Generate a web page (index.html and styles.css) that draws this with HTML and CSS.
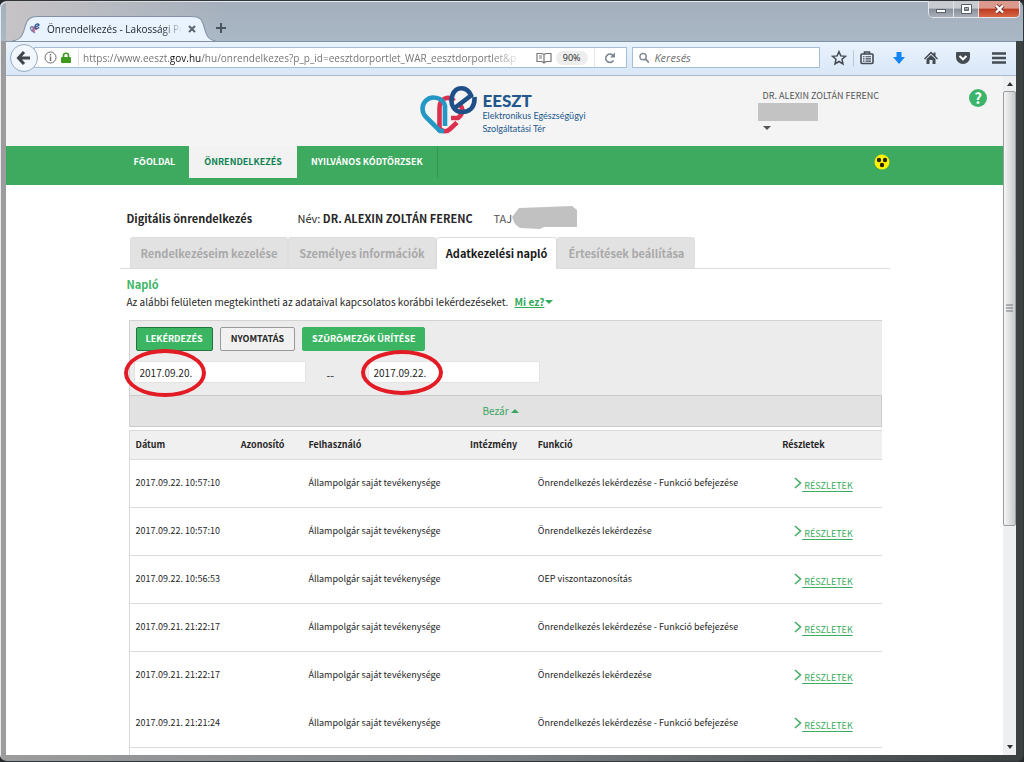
FILE: index.html
```html
<!DOCTYPE html>
<html lang="hu">
<head>
<meta charset="utf-8">
<meta name="viewport" content="width=device-width, initial-scale=1">
<title>Önrendelkezés - Lakossági Portál</title>
<link rel="stylesheet" href="styles.css">
</head>
<body>
<div class="window">
  <div class="titlebar">
    <div class="tab">
      <svg class="tab-shape" viewBox="0 0 200 25" preserveAspectRatio="none" aria-hidden="true"><path d="M0 25C10 24 11 17 13 10C15 3 18 .5 25 .5H176C184 .5 186 3 188 10C190 17 191 24 200 25" fill="#e9f3fd" stroke="#8292a4"/></svg>
      <svg class="favicon" viewBox="0 0 12 12" aria-hidden="true"><path d="M6 10L3 8C0 5 2 3 4 4V9" fill="none" stroke="#7685b4" stroke-width="1.5"/><path d="M5 9V5C5 3 8 4 7 7" fill="none" stroke="#d84a68" stroke-width="1.4"/><path d="M7 4L10 2C9 0 6 1 6 4S9 6 10 4" fill="none" stroke="#335b98" stroke-width="1.4"/></svg>
      <span class="tab-title">Önrendelkezés - Lakossági Po</span>
      <button class="plain" type="button" aria-label="Lap bezárása"><svg width="8" height="8" viewBox="0 0 8 8"><path d="M1 1L7 7M7 1L1 7" stroke="#5d6670" stroke-width="2"/></svg></button>
    </div>
    <button class="plain new-tab" type="button" aria-label="Új lap"><svg width="10" height="10" viewBox="0 0 10 10"><path d="M5 0V10M0 5H10" stroke="#4b555f" stroke-width="2"/></svg></button>
    <div class="controls">
      <button type="button" aria-label="Kis méret"><svg width="24" height="16" viewBox="0 0 24 16"><rect x="7.500" y="8.500" width="9" height="3" fill="#fff" stroke="#58606b"/></svg></button>
      <button type="button" aria-label="Teljes méret"><svg width="24" height="16" viewBox="0 0 24 16"><path d="M7.500 3.500H17.500V12.500H7.500ZM10.500 6.500V9.500H14.500V6.500Z" fill="#fff" fill-rule="evenodd" stroke="#58606b"/></svg></button>
      <button class="close" type="button" aria-label="Bezárás"><svg width="40" height="16" viewBox="0 0 40 16"><path d="M17 4.500L24 11.500M24 4.500L17 11.500" stroke="#6e3434" stroke-width="4"/><path d="M17 4.500L24 11.500M24 4.500L17 11.500" stroke="#fff" stroke-width="2.400"/></svg></button>
    </div>
  </div>

  <div class="toolbar">
    <button class="back" type="button" aria-label="Vissza"><svg width="16" height="14" viewBox="0 0 16 14"><path d="M8 1L2.500 7L8 13M3 7H14" fill="none" stroke="#40454b" stroke-width="3"/></svg></button>
    <div class="urlbox">
      <svg width="13" height="13" viewBox="0 0 13 13" aria-hidden="true"><circle cx="6.500" cy="6.500" r="5.500" fill="none" stroke="#6d6d6d"/><path d="M6.500 5.500V10M6.500 3V4.500" stroke="#6d6d6d" stroke-width="1.400"/></svg>
      <svg width="10" height="12" viewBox="0 0 10 12" aria-hidden="true"><path d="M2.500 6V3.500C2.500 .5 7.500 .5 7.500 3.500V6" fill="none" stroke="#3f9b1f" stroke-width="1.700"/><rect y="5" width="10" height="6" rx="1" fill="#3f9b1f"/></svg>
      <span class="url">https://www.eeszt.<b>gov.hu</b>/hu/onrendelkezes?p_p_id=eesztdorportlet_WAR_eesztdorportlet&amp;p</span>
      <svg width="16" height="12" viewBox="0 0 16 12" aria-hidden="true"><path d="M8 2.500L6 1.500H1V9.500H6L8 11L10 9.500H15V1.500H10ZM8 2.500V11" fill="#fff" stroke="#777" stroke-width="1.200"/><path d="M3 4H6M3 6H6" stroke="#777"/></svg>
      <span class="zoom">90%</span>
      <button class="plain reload" type="button" aria-label="Újratöltés"><svg width="12" height="12" viewBox="0 0 12 12"><path d="M9.500 4A4.200 4.200 0 1 0 9.500 8.500" fill="none" stroke="#7b8792" stroke-width="1.600"/><path d="M11 .5V5.500H6Z" fill="#7b8792"/></svg></button>
    </div>
    <label class="searchbox">
      <svg width="12" height="12" viewBox="0 0 12 12" aria-hidden="true"><circle cx="4.500" cy="4.500" r="3.500" fill="none" stroke="#858b92" stroke-width="1.600"/><path d="M7 7L11 11" stroke="#858b92" stroke-width="2.200"/></svg>
      <input type="search" placeholder="Keresés" aria-label="Keresés">
    </label>
    <div class="tools">
      <button class="plain star" type="button" aria-label="Könyvjelző"><svg width="16" height="16" viewBox="0 0 16 16"><path d="M8 1.700L9.800 5.900L14.500 6.300L11 9.300L12 14L8 11.500L4 14L5 9.300L1.500 6.300L6.200 5.900Z" fill="none" stroke="#454b52" stroke-width="1.500"/></svg></button>
      <button class="plain list" type="button" aria-label="Könyvjelzők"><svg width="14" height="16" viewBox="0 0 14 16"><rect x="1" y="4" width="12" height="9.500" rx="1" fill="none" stroke="#454b52" stroke-width="1.600"/><path d="M4.500 4V2H9.500V4" fill="none" stroke="#454b52" stroke-width="1.600"/><path d="M3 6.700H4.500M5.500 6.700H11M3 8.900H4.500M5.500 8.900H11M3 11.100H4.500M5.500 11.100H11" stroke="#454b52" stroke-width="1.100"/></svg></button>
      <button class="plain" type="button" aria-label="Letöltések"><svg width="14" height="16" viewBox="0 0 14 16"><path d="M4.500 2H9.500V7H13L7 14L1 7H4.500Z" fill="#1584f5"/></svg></button>
      <button class="plain" type="button" aria-label="Kezdőlap"><svg width="14" height="16" viewBox="0 0 14 16"><path d="M0 8.500L7 1.500L9.500 4V2.500H11.500V6L14 8.500L13 9.500L7 3.800L1 9.500Z" fill="#454b52"/><path d="M2.500 9L7 5L11.500 9V14H8.500V10H5.500V14H2.500Z" fill="#454b52"/></svg></button>
      <button class="plain" type="button" aria-label="Pocket"><svg width="14" height="16" viewBox="0 0 14 16"><path d="M1 2H13Q14 2 14 3V7A7 7 0 0 1 0 7V3Q0 2 1 2Z" fill="#454b52"/><path d="M3.500 6L7 9.300L10.500 6" fill="none" stroke="#fff" stroke-width="2"/></svg></button>
      <button class="plain menu" type="button" aria-label="Menü"><svg width="14" height="16" viewBox="0 0 14 16"><path d="M0 3.500H14M0 8H14M0 12.500H14" stroke="#454b52" stroke-width="2.400"/></svg></button>
    </div>
  </div>

  <div class="viewport">
    <div class="page">
      <header class="header">
        <a class="logo" href="#">
          <svg width="58" height="50" viewBox="0 0 58 50" aria-hidden="true">
            <g fill="none" stroke-width="4.600">
              <path d="M19.500 46V22C19.500 12 29 9 34 15" stroke="#dc304f"/>
              <path d="M39 18C44 22 43 28 38 32H31" stroke="#dc304f"/>
              <path d="M37 36.500L30 43C27 46 23 46 20 43" stroke="#dc304f"/>
              <path d="M25 40V20C23 11 11 9 5.500 15C1 20 2 27 6 31L20 45H24" stroke="#2498c5"/>
              <path d="M34 22.500L51 9.500C47 0 36 0 32.500 9C29 19 35 26.500 43 26C51 25.500 55 20 54.500 11" stroke="#1e4f86"/>
            </g>
          </svg>
          <span class="logo-text"><strong>EESZT</strong><span>Elektronikus Egészségügyi</span><span>Szolgáltatási Tér</span></span>
        </a>
        <div class="account">
          <button class="plain user" type="button"><span>DR. ALEXIN ZOLTÁN FERENC</span><span class="mask"></span><span class="caret"></span></button>
          <a class="help" href="#" aria-label="Súgó">?</a>
        </div>
      </header>
      <nav class="nav">
        <div class="nav-inner">
          <a href="#">FŐOLDAL</a><a class="active" href="#">ÖNRENDELKEZÉS</a><a class="last" href="#">NYILVÁNOS KÓDTÖRZSEK</a>
          <button class="plain vision" type="button" aria-label="Akadálymentes nézet"><svg width="16" height="16" viewBox="0 0 16 16"><circle cx="8" cy="8" r="7.500" fill="#fff200"/><g fill="#26220c"><circle cx="5" cy="6" r="2.200"/><circle cx="11" cy="6" r="2.200"/><circle cx="8" cy="11" r="2.200"/></g></svg></button>
        </div>
      </nav>
      <main class="main">
        <div class="identity">
          <h1>Digitális önrendelkezés</h1>
          <p class="name">Név: <b>DR. ALEXIN ZOLTÁN FERENC</b></p>
          <p class="taj">TAJ<svg width="65" height="24" viewBox="0 0 65 24" aria-hidden="true"><path d="M0 11L7 2L60 0L65 4V21L32 21L28 23L8 22L3 18Z" fill="#c1c1c1"/></svg></p>
        </div>
        <div class="tabs">
          <a href="#">Rendelkezéseim kezelése</a><a href="#">Személyes információk</a><a class="current" href="#">Adatkezelési napló</a><a href="#">Értesítések beállítása</a>
        </div>
        <h2>Napló</h2>
        <p class="intro">Az alábbi felületen megtekintheti az adataival kapcsolatos korábbi lekérdezéseket. <a href="#">Mi ez?<span class="caret"></span></a></p>
        <form class="filter">
          <div class="buttons">
            <button class="primary focus" type="button">LEKÉRDEZÉS</button>
            <button class="outline" type="button">NYOMTATÁS</button>
            <button class="primary" type="button">SZŰRŐMEZŐK ÜRÍTÉSE</button>
          </div>
          <div class="dates">
            <div class="field"><input type="text" value="2017.09.20." aria-label="Kezdő dátum"><span class="ring"></span></div>
            <span class="dash">--</span>
            <div class="field"><input type="text" value="2017.09.22." aria-label="Záró dátum"><span class="ring ring-end"></span></div>
          </div>
          <button class="collapse" type="button">Bezár<span class="caret up"></span></button>
        </form>
        <table class="log">
          <colgroup><col class="c-date"><col class="c-id"><col class="c-user"><col class="c-inst"><col class="c-func"><col></colgroup>
          <thead><tr><th>Dátum</th><th>Azonosító</th><th>Felhasználó</th><th>Intézmény</th><th>Funkció</th><th>Részletek</th></tr></thead>
          <tbody>
            <tr><td>2017.09.22. 10:57:10</td><td></td><td>Állampolgár saját tevékenysége</td><td></td><td>Önrendelkezés lekérdezése - Funkció befejezése</td><td><a href="#"><svg viewBox="0 0 8 12"><path d="M1 1L6.500 6L1 11"/></svg><span>&nbsp;RÉSZLETEK</span></a></td></tr>
            <tr><td>2017.09.22. 10:57:10</td><td></td><td>Állampolgár saját tevékenysége</td><td></td><td>Önrendelkezés lekérdezése</td><td><a href="#"><svg viewBox="0 0 8 12"><path d="M1 1L6.500 6L1 11"/></svg><span>&nbsp;RÉSZLETEK</span></a></td></tr>
            <tr><td>2017.09.22. 10:56:53</td><td></td><td>Állampolgár saját tevékenysége</td><td></td><td>OEP viszontazonosítás</td><td><a href="#"><svg viewBox="0 0 8 12"><path d="M1 1L6.500 6L1 11"/></svg><span>&nbsp;RÉSZLETEK</span></a></td></tr>
            <tr><td>2017.09.21. 21:22:17</td><td></td><td>Állampolgár saját tevékenysége</td><td></td><td>Önrendelkezés lekérdezése - Funkció befejezése</td><td><a href="#"><svg viewBox="0 0 8 12"><path d="M1 1L6.500 6L1 11"/></svg><span>&nbsp;RÉSZLETEK</span></a></td></tr>
            <tr class="joined"><td>2017.09.21. 21:22:17</td><td></td><td>Állampolgár saját tevékenysége</td><td></td><td>Önrendelkezés lekérdezése</td><td><a href="#"><svg viewBox="0 0 8 12"><path d="M1 1L6.500 6L1 11"/></svg><span>&nbsp;RÉSZLETEK</span></a></td></tr>
            <tr><td>2017.09.21. 21:21:24</td><td></td><td>Állampolgár saját tevékenysége</td><td></td><td>Önrendelkezés lekérdezése - Funkció befejezése</td><td><a href="#"><svg viewBox="0 0 8 12"><path d="M1 1L6.500 6L1 11"/></svg><span>&nbsp;RÉSZLETEK</span></a></td></tr>
            <tr><td></td><td></td><td></td><td></td><td></td><td></td></tr>
          </tbody>
        </table>
      </main>
    </div>
    <div class="scrollbar" aria-hidden="true">
      <span class="caret up"></span>
      <div class="track"><div class="thumb"><svg width="7" height="8" viewBox="0 0 7 8"><path d="M0 1H7M0 4H7M0 7H7" stroke="#70757b"/></svg></div></div>
      <span class="caret"></span>
    </div>
  </div>
</div>
</body>
</html>
```

FILE: styles.css
```css
* { box-sizing: border-box; }

body {
  margin: 0;
  height: 100vh;
  overflow: hidden;
  background: #25282b;
  color: #262626;
  font: 11px/16px "Noto Sans CJK SC", "Noto Sans", sans-serif;
}

h1, h2, p { margin: 0; }
a { color: inherit; text-decoration: none; }
button, input { font: inherit; color: inherit; }
button { cursor: pointer; }

.plain { display: flex; align-items: center; padding: 0; border: 0; background: none; }

.caret {
  display: inline-block;
  border: solid transparent;
  border-width: 4px 4px 0;
  border-top-color: currentColor;
}
.caret.up {
  border-width: 0 4px 4px;
  border-bottom-color: currentColor;
}

/* Window frame */
.window {
  display: flex;
  flex-direction: column;
  height: 100vh;
  padding: 0 7px 6px 6px;
  border: solid #30353a;
  border-width: 1px 1px 1px 0;
  border-radius: 7px;
  background:
    linear-gradient(#a4aebb, #a9b8c6 40px, transparent 40px),
    linear-gradient(90deg, #9c9c9c 0 6px, #7c8185 50%, #3b4041 99%);
  box-shadow: inset 1px 1px 0 #e6ebf0;
}

.titlebar {
  display: flex;
  flex: none;
  height: 40px;
  background: linear-gradient(90deg, #c6c3c5, transparent 22%);
}

.tab {
  position: relative;
  display: flex;
  align-items: center;
  align-self: flex-end;
  gap: 6px;
  width: 204px;
  height: 25px;
  margin-left: 6px;
  padding: 0 20px 0 17px;
  font-family: "Open Sans", sans-serif;
  font-size: 10px;
  color: #1b1f24;
}
.tab-shape { position: absolute; inset: 0; width: 100%; height: 100%; }
.favicon { position: relative; flex: none; width: 12px; height: 12px; }
.tab-title {
  position: relative;
  flex: 1;
  overflow: hidden;
  white-space: nowrap;
  mask-image: linear-gradient(90deg, #000 85%, transparent);
}
.tab .plain { position: relative; }
.new-tab { margin-top: 13px; }

.controls {
  display: flex;
  height: 17px;
  margin: 0 -4px 0 auto;
  border: 1px solid #e2e6ea;
  border-top: 0;
  border-radius: 0 0 5px 5px;
  overflow: hidden;
}
.controls button {
  padding: 0;
  border: 0;
  border-right: 1px solid #dfe3e8;
  background: linear-gradient(#c8cbd0 45%, #878e99 50%, #a9b0b9);
}
.controls .close { border: 0; background: linear-gradient(#dc9a8c 45%, #bd3a22 50%, #d86645); }
.controls svg { display: block; }

.toolbar {
  display: flex;
  flex: none;
  align-items: center;
  height: 35px;
  padding: 0 0 2px 4px;
  border-top: 1px solid #8494a5;
  border-bottom: 1px solid #a9bccd;
  background: linear-gradient(#e9f3fd, #d9e7f7);
  font-family: "Open Sans", sans-serif;
}
.back {
  z-index: 1;
  display: grid;
  place-items: center;
  width: 28px;
  height: 28px;
  padding: 0;
  border: 1px solid #97a9bd;
  border-radius: 50%;
  background: #f1f7fd;
}
.urlbox, .searchbox {
  display: flex;
  align-items: center;
  height: 21px;
  border: 1px solid #a5bdd7;
  background: #fff;
}
.urlbox {
  flex: 10 1 0;
  min-width: 0;
  gap: 4px;
  margin-left: -4px;
  padding-left: 9px;
}
.urlbox > svg { flex: none; }
.url {
  flex: 1;
  margin: 0 10px 0 3px;
  padding-left: 4px;
  border-left: 1px solid #e0e0e0;
  overflow: hidden;
  white-space: nowrap;
  color: #757575;
  font-size: 10px;
  mask-image: linear-gradient(90deg, #000 93%, transparent);
}
.url b { font-weight: 400; color: #111; }
.zoom {
  padding: 0 7px;
  border-radius: 8px;
  background: #ededed;
  font-size: 9px;
  line-height: 14px;
}
.reload { align-self: stretch; margin-left: 2px; padding: 0 10px 0 9px; border-left: 1px solid #e6e6e6; }
.searchbox { flex: 3 1 0; min-width: 0; gap: 5px; margin-left: 5px; padding: 0 6px; }
.searchbox input {
  width: 100%;
  min-width: 0;
  padding: 0;
  border: 0;
  outline: 0;
  background: none;
  font-style: italic;
}
.searchbox input::placeholder { color: #6f6f6f; }
.tools { display: flex; align-items: center; gap: 18px; align-self: stretch; padding: 0 10px 0 11px; }
.star { margin-right: -12px; }
.list { padding-left: 6px; border-left: 1px solid #b9c8d8; }
.menu { align-self: stretch; margin-left: 4px; }

/* Portal page */
.viewport { display: flex; flex: 1; min-height: 0; background: #fff; }
.page { flex: 1; min-width: 0; overflow: hidden; }

.header {
  display: grid;
  grid-template-columns: 1fr auto 1fr;
  height: 70px;
  background: #f4f4f4;
}
.logo {
  grid-column: 2;
  display: flex;
  align-items: center;
  gap: 4px;
  color: #23588f;
}
.logo-text {
  display: flex;
  flex-direction: column;
  padding: 5px 3px 0 0;
  font: 9px/13px Lato, sans-serif;
}
.logo-text strong { font-size: 17px; font-weight: 900; line-height: 16px; }
.account { display: flex; align-items: flex-start; justify-content: space-between; padding: 13px 16px 0 174px; }
.user {
  flex-direction: column;
  align-items: flex-start;
  font-size: 9px;
  line-height: 14px;
  white-space: nowrap;
  color: #555;
}
.mask { width: 60px; height: 18px; margin: 0 0 5px -5px; background: #c3c3c3; }
.help {
  width: 18px;
  border-radius: 50%;
  background: #3cb56b;
  color: #fff;
  font-size: 15px;
  font-weight: 700;
  line-height: 18px;
  text-align: center;
}

.nav { height: 39px; background: #3daa5f; }
.nav-inner {
  display: flex;
  align-items: flex-start;
  max-width: 770px;
  margin: 0 auto;
  color: #fff;
  font-size: 9px;
  font-weight: 700;
  line-height: 32px;
}
.nav a { padding: 0 14px; }
.nav .active { padding: 0 15px; background: #f2f2f2; color: #0f8251; }
.nav .last { border-right: 1px solid #359553; }
.vision { align-self: center; height: 32px; margin-left: auto; }

.main { max-width: 770px; margin: 0 auto; }
.identity {
  display: flex;
  align-items: center;
  height: 52px;
  padding: 13px 7px 0;
  line-height: 24px;
  white-space: nowrap;
}
h1 { width: 171px; font-size: 11px; font-weight: 700; }
.name { width: 196px; }
.taj { display: flex; color: #555; }

.tabs {
  display: flex;
  padding-left: 10px;
  border-bottom: 1px solid #dcdcdc;
  font-weight: 700;
  line-height: 30px;
}
.tabs a {
  padding: 0 10px;
  border: 1px solid #dedede;
  border-bottom: 0;
  border-radius: 3px 3px 0 0;
  background: #e2e2e2;
  color: #a9a9a9;
}
.tabs .current { margin-bottom: -1px; padding: 0 9px; background: #fff; color: #1a1a1a; }

h2 { padding: 6px 7px 0; color: #3cb563; font-size: 11px; font-weight: 700; line-height: 18px; }
.intro { padding: 0 7px 9px; font-size: 10px; line-height: 18px; }
.intro a { margin-left: 4px; color: #2faa58; font-weight: 700; text-decoration: underline; }
.intro .caret { margin: 0 0 2px 1px; }

.filter {
  margin: 0 8px 3px 9px;
  border: solid #d2d2d2;
  border-width: 1px 0 0 1px;
  background: #ececec;
}
.buttons { display: flex; gap: 7px; padding: 6px 6px 0; }
.buttons button {
  height: 24px;
  padding: 0 9px;
  border: 1px solid #3cb563;
  border-radius: 2px;
  font-size: 9px;
  font-weight: 700;
  line-height: 20px;
}
.buttons .primary { background: #3cb563; color: #fff; }
.buttons .focus { border-color: #23753e; }
.buttons .outline { padding: 0 10px; border-color: #999; background: #f1f1f1; }
.dates { display: flex; padding: 10px 4px 12px; }
.field { position: relative; width: 172px; }
.field input {
  display: block;
  width: 100%;
  height: 22px;
  padding: 0 5px;
  border: 1px solid #e3e3e3;
  background: #fff;
  font-size: 10px;
}
/* Highlight around a date */
.ring {
  position: absolute;
  top: -12px;
  left: -10px;
  width: 82px;
  height: 48px;
  border: 4px solid #e21b25;
  border-radius: 50%;
  pointer-events: none;
}
.ring-end { top: -11px; left: -7px; height: 45px; }
.dash { width: 62px; padding: 6px 0 0 21px; font-size: 11px; }
.collapse {
  display: block;
  width: 100%;
  padding: 0 9px 0 0;
  border: 1px solid #cbcbcb;
  border-left: 0;
  background: #e2e2e2;
  color: #3aa55f;
  font-size: 10px;
  line-height: 30px;
}
.collapse .caret { margin: 0 0 2px 2px; }

.log {
  width: calc(100% - 17px);
  margin-left: 9px;
  border: solid #d9d9d9;
  border-width: 1px 0 0 1px;
  border-spacing: 0;
  table-layout: fixed;
  font-size: 9px;
  white-space: nowrap;
}
.c-date { width: 14%; }
.c-id { width: 9%; }
.c-user { width: 21.500%; }
.c-inst { width: 9%; }
.c-func { width: 32.500%; }
th, td { height: 48px; padding: 0 6px 2px; border-bottom: 1px solid #dadada; text-align: left; }
th { height: 29px; padding-bottom: 0; background: #f0f0f0; font-weight: 700; }
.joined td { border-color: transparent; }
td a { display: flex; align-items: center; padding-left: 12px; color: #3cab61; }
td svg { width: 8px; height: 12px; fill: none; stroke: currentColor; stroke-width: 1.500; }
td a span { padding-top: 6px; text-decoration: underline; text-underline-offset: 2px; }

.scrollbar {
  display: flex;
  flex-direction: column;
  align-items: center;
  width: 13px;
  padding: 6px 0;
  background: #eeeff0;
  color: #333;
}
.scrollbar .caret { flex: none; border-left-width: 3px; border-right-width: 3px; }
.track { flex: 1; align-self: stretch; margin: 5px 0; }
.thumb {
  display: grid;
  place-items: center;
  height: 67%;
  border: 1px solid #999da2;
  border-radius: 2px;
  background: linear-gradient(90deg, #f5f5f5, #c9cacc);
}
```
